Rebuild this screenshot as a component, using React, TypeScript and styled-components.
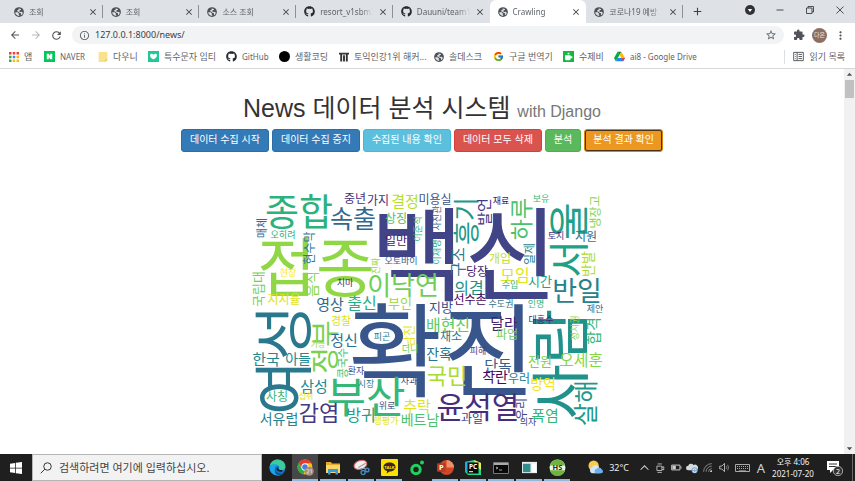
import React from "react";
import styled, { createGlobalStyle } from "styled-components";
import { FaGithub } from "react-icons/fa";
import { FcGoogle } from "react-icons/fc";
import {
  MdAdd, MdArrowBack, MdArrowForward, MdClose, MdExtension, MdInfoOutline,
  MdMoreVert, MdRefresh, MdStarBorder,
} from "react-icons/md";

const uiFont = `"Noto Sans", "Noto Sans CJK KR", sans-serif`;
const pageFont = `"Liberation Sans", "Noto Sans CJK KR", sans-serif`;

const GlobalStyle = createGlobalStyle`
  *, *::before, *::after { box-sizing: border-box; }
  body { margin: 0; background: #fff; font-family: ${uiFont}; overflow: hidden; }
  button, input { font: inherit; color: inherit; border: 0; padding: 0; margin: 0; background: none; }
  svg { display: block; flex: none; }
`;

const Screen = styled.div`
  display: flex;
  flex-direction: column;
  height: 100vh;
`;

/* ---------- browser chrome ---------- */
const TabStrip = styled.div`
  display: flex;
  flex: none;
  height: 23px;
  padding-left: 6px;
  background: #dee1e6;
`;
const TabList = styled.div`
  display: grid;
  grid-template-columns: repeat(7, 1fr);
  flex: 0 1 677px;
  min-width: 0;
`;
const Tab = styled.div<{ $active?: boolean; $line?: boolean }>`
  display: flex;
  align-items: center;
  gap: 5px;
  min-width: 0;
  padding: 0 5px 0 8px;
  color: #5f6368;
  background: ${(p) => (p.$active ? "#fff" : "transparent")};
  border-radius: 6px 6px 0 0;
  position: relative;
  &::after {
    content: "";
    display: ${(p) => (p.$line ? "block" : "none")};
    position: absolute;
    right: 0;
    top: 5px;
    width: 1px;
    height: 13px;
    background: #8d9196;
  }
`;
const TabLabel = styled.button`
  flex: 1;
  min-width: 0;
  overflow: hidden;
  white-space: nowrap;
  text-align: left;
  font-size: 8px;
  line-height: 14px;
  mask-image: linear-gradient(90deg, #000 75%, transparent);
`;
const IconButton = styled.button`
  display: flex;
  align-items: center;
  justify-content: center;
  flex: none;
  color: #3c4043;
`;
const NewTab = styled(IconButton)`
  width: 28px;
`;
const WindowControls = styled.div`
  display: flex;
  margin-left: auto;
  height: 20px;
`;
const WindowButton = styled(IconButton)`
  width: 30px;
`;

const Toolbar = styled.div`
  display: flex;
  align-items: center;
  flex: none;
  height: 24px;
  padding: 0 4px 0 4px;
`;
const NavButton = styled(IconButton)<{ $dim?: boolean }>`
  width: 21px;
  color: ${(p) => (p.$dim ? "#b4b7ba" : "#505357")};
`;
const Address = styled.label`
  display: flex;
  align-items: center;
  gap: 5px;
  flex: 1;
  height: 18px;
  margin: 0 4px 0 5px;
  padding: 0 7px 0 7px;
  border-radius: 9px;
  background: #f1f3f4;
  color: #5f6368;
`;
const UrlInput = styled.input`
  flex: 1;
  min-width: 0;
  font-size: 9px;
  line-height: 14px;
  color: #3c4043;
  outline: none;
`;
const Avatar = styled.button`
  width: 15px;
  height: 15px;
  margin: 0 3px;
  border-radius: 50%;
  background: #8d6e63;
  color: #efe3df;
  font-size: 6px;
  line-height: 14px;
  text-align: center;
  white-space: nowrap;
`;
const Bookmarks = styled.nav`
  display: flex;
  align-items: center;
  flex: none;
  height: 22px;
  padding: 0 10px 2px 9px;
  border-bottom: 1px solid #d5d7da;
`;
const Bookmark = styled.a<{ $w: number; $latin?: boolean }>`
  display: flex;
  align-items: center;
  gap: 5px;
  flex: 0 0 ${(p) => p.$w}px;
  font-size: ${(p) => (p.$latin ? 8 : 9)}px;
  line-height: 14px;
  color: #5f6368;
  white-space: nowrap;
  text-decoration: none;
`;
const ReadingList = styled.button`
  display: flex;
  align-items: center;
  gap: 6px;
  margin-left: auto;
  padding-left: 8px;
  border-left: 1px solid #dcdee0;
  font-size: 9px;
  line-height: 14px;
  color: #5f6368;
  white-space: nowrap;
`;

/* ---------- page ---------- */
const Viewport = styled.div`
  display: flex;
  flex: 1;
  min-height: 0;
`;
const Page = styled.main`
  display: flex;
  flex-direction: column;
  align-items: center;
  flex: 1;
  min-width: 0;
  overflow: hidden;
  padding-top: 24px;
  font-family: ${pageFont};
`;
const Title = styled.h1`
  margin: 0;
  font-size: 25px;
  font-weight: 400;
  line-height: 30px;
  color: #333;
  white-space: nowrap;
`;
const Subtitle = styled.small`
  font-size: 16px;
  line-height: 16px;
  color: #777;
`;
const Actions = styled.div`
  display: flex;
  gap: 3px;
  margin: 6px 0 38px;
`;
const Action = styled.button<{ $bg: string; $edge: string; $focus?: boolean }>`
  height: 23px;
  padding: 0 8px 1px;
  border: 1px solid ${(p) => p.$edge};
  border-radius: 3px;
  background: ${(p) => p.$bg};
  color: #fff;
  font-size: 10px;
  line-height: 14px;
  white-space: nowrap;
  outline: ${(p) => (p.$focus ? "1px solid #4a3413" : "none")};
  outline-offset: -2px;
`;
const Cloud = styled.svg`
  width: 368px;
  max-width: 100%;
  font-family: "Noto Sans CJK KR", sans-serif;
`;

const Scrollbar = styled.div`
  display: flex;
  flex-direction: column;
  align-items: center;
  flex: none;
  width: 11px;
  background: #f1f1f1;
`;
const ScrollArrow = styled(IconButton)`
  width: 11px;
  height: 11px;
  color: #505050;
`;
const Thumb = styled.div`
  width: 9px;
  height: 18px;
  margin-bottom: auto;
  background: #c1c1c1;
`;

/* ---------- taskbar ---------- */
const Taskbar = styled.footer`
  display: flex;
  flex: none;
  height: 27px;
  background: #1f1f1f;
  color: #f2f2f2;
`;
const Start = styled(IconButton)`
  width: 32px;
  color: #fff;
`;
const Search = styled.label`
  display: flex;
  align-items: center;
  gap: 7px;
  flex: 0 1 230px;
  min-width: 0;
  padding-left: 7px;
  border: 1px solid #b5b5b5;
  background: #f2f2f2;
  color: #333;
`;
const SearchInput = styled.input`
  flex: 1;
  min-width: 0;
  font-size: 11px;
  line-height: 16px;
  outline: none;
  &::placeholder { color: #444; opacity: 1; }
`;
const Apps = styled.div`
  display: flex;
  padding-left: 1px;
`;
const AppButton = styled(IconButton)<{ $open?: boolean; $active?: boolean }>`
  width: 26px;
  margin: 0 1px;
  padding-top: 2px;
  background: ${(p) => (p.$active ? "#474747" : "transparent")};
  border-bottom: 2px solid ${(p) => (p.$open ? "#8dbbe0" : "transparent")};
`;
const Tray = styled.div`
  display: flex;
  align-items: center;
  margin-left: auto;
`;
const Weather = styled.button`
  display: flex;
  align-items: center;
  gap: 6px;
  margin-right: 7px;
  font-size: 9px;
  line-height: 14px;
`;
const TrayButton = styled(IconButton)<{ $w?: number }>`
  width: ${(p) => p.$w ?? 16}px;
  height: 27px;
  color: #d0d0d0;
  font-size: 13px;
`;
const Clock = styled.time`
  width: 48px;
  font-size: 8px;
  line-height: 12px;
  text-align: center;
  white-space: nowrap;
`;
const ShowDesktop = styled.button`
  width: 3px;
  height: 27px;
  border-left: 1px solid #6a6a6a;
`;

type Word = [text: string, x: number, y: number, size: number, color: string, vertical?: boolean];

const words: Word[] = [
  ["백신", 464, 255, 102, "#414487"], ["확진", 442, 351, 102, "#39568c"],
  ["접종", 316, 267, 64, "#8fd744"], ["여성", 284, 360, 60, "#2a788e", true],
  ["사람", 561, 364, 60, "#21918c", true], ["부산", 366, 397, 43, "#35b779"],
  ["서울", 569, 240, 41, "#1fa187", true], ["종합", 299, 212, 37, "#2db27d"],
  ["윤석열", 478, 407, 30, "#472d7b"], ["정부", 325, 347, 29, "#7ad151", true],
  ["반일", 577, 291, 27, "#26828e"], ["이낙연", 403, 285, 26, "#6ece58"],
  ["흥기", 466, 221, 26, "#1f998a", true], ["살해", 586, 403, 25, "#1f998a", true],
  ["속출", 353, 219, 25, "#31688e"], ["하루", 521, 219, 23, "#4ac16d", true],
  ["감염", 319, 413, 22, "#443983"], ["국민", 447, 376, 22, "#a8db34"],
  ["중년", 355, 199, 12, "#472f7d"], ["가지", 378, 201, 12, "#472f7d"],
  ["결정", 405, 201, 15, "#b5de2b"], ["미용실", 435, 200, 12, "#3b528b"],
  ["매체", 262, 228, 11, "#31688e", true], ["오히려", 283, 235, 9, "#25ab82"],
  ["현수막", 310, 248, 12, "#2a788e", true], ["국립대", 258, 289, 13, "#73d056", true],
  ["현장", 288, 273, 9, "#fde725"], ["음식", 312, 284, 14, "#86d549", true],
  ["지지율", 284, 300, 12, "#dde318"], ["치마", 345, 283, 9, "#482475"],
  ["영상", 330, 304, 15, "#31688e"], ["출신", 362, 303, 16, "#26ad81"],
  ["상징", 396, 219, 12, "#4ac16d"], ["일만", 396, 241, 12, "#481769"],
  ["이준석", 418, 229, 9, "#35b779", true], ["사진관", 437, 218, 9, "#33638d", true],
  ["이재명", 437, 252, 9, "#25ab82", true], ["오토바이", 401, 261, 9, "#33638d"],
  ["진짜", 376, 266, 9, "#a0da39", true], ["발언", 484, 212, 15, "#443983", true],
  ["구조", 458, 262, 16, "#2a788e", true], ["당장", 477, 272, 12, "#481f70"],
  ["의겸", 469, 288, 16, "#21918c"], ["선수촌", 470, 300, 12, "#46085c"],
  ["부인", 400, 303, 13, "#9bd93c"], ["지방", 441, 307, 13, "#3b528b"],
  ["재료", 501, 201, 9, "#471365"], ["보유", 541, 199, 9, "#35b779"],
  ["냉장고", 596, 212, 12, "#86d549", true], ["토지", 556, 236, 9, "#472d7b"],
  ["지원", 586, 237, 12, "#2c728e"], ["일제", 530, 254, 12, "#26828e", true],
  ["개입", 500, 259, 12, "#c2df23"], ["모임", 515, 275, 16, "#dfe318"],
  ["반발", 588, 264, 14, "#addc30", true], ["수입", 510, 285, 9, "#35b779"],
  ["시간", 540, 281, 13, "#1fa187"], ["수도권", 501, 304, 9, "#2a788e"],
  ["인명", 536, 304, 9, "#31b57b"], ["제안", 595, 309, 9, "#31688e"],
  ["경찰", 341, 321, 11, "#d8e219"], ["정신", 344, 340, 15, "#2c728e"],
  ["가능", 318, 344, 8, "#a0da39"], ["콩국수", 343, 363, 11, "#4ac16d", true],
  ["한국", 266, 359, 15, "#23888e"], ["아들", 298, 359, 14, "#23888e"],
  ["환자", 356, 371, 9, "#3b528b"], ["삼성", 314, 386, 15, "#23888e"],
  ["사칭", 277, 397, 12, "#35b779"], ["섭취", 306, 396, 8, "#e5e419"],
  ["서유럽", 279, 419, 14, "#26828e"], ["방귀", 361, 415, 16, "#1f9e89"],
  ["시장", 366, 384, 9, "#2a788e"], ["피곤", 382, 337, 9, "#2a788e"],
  ["배현진", 448, 325, 16, "#5ec962"], ["채소", 451, 337, 12, "#2a788e"],
  ["남진", 410, 336, 12, "#e5e419", true], ["더니", 410, 349, 9, "#6ece58"],
  ["잔혹", 439, 354, 14, "#2c728e"], ["피해", 478, 351, 9, "#443983"],
  ["사과", 409, 381, 9, "#3e4a89"], ["위로", 387, 406, 9, "#39568c"],
  ["추락", 417, 406, 15, "#dde318"], ["베트남", 420, 420, 14, "#4ac16d"],
  ["행평가", 386, 421, 9, "#dde318"], ["과일", 472, 419, 12, "#443983"],
  ["달라", 504, 323, 15, "#481f70"], ["파업", 507, 335, 12, "#6ece58"],
  ["단독", 498, 365, 15, "#34618d"], ["착란", 495, 377, 14, "#46085c"],
  ["우러", 519, 379, 12, "#26828e"], ["우리", 522, 409, 12, "#414487", true],
  ["의자", 528, 422, 9, "#414487"], ["대홍수", 541, 320, 9, "#482475"],
  ["정치권", 575, 328, 9, "#8fd744", true], ["합격", 593, 331, 15, "#35b779", true],
  ["전원", 540, 361, 13, "#7ad151"], ["오세훈", 581, 360, 16, "#86d549"],
  ["방역", 543, 384, 14, "#f0e51d"], ["폭염", 545, 415, 15, "#35b779"],
];

function WordCloud() {
  return (
    <Cloud viewBox="238 190 368 240" role="img" aria-label="뉴스 워드 클라우드">
      {words.map(([text, x, y, size, color, vertical], i) => (
        <text
          key={i}
          fontSize={size}
          fill={color}
          textAnchor="middle"
          dy="0.37em"
          transform={`translate(${x} ${y})${vertical ? " rotate(-90)" : ""}`}
        >
          {text}
        </text>
      ))}
    </Cloud>
  );
}

/* ---------- small drawings ---------- */
const Svg = ({ s = 16, children }: { s?: number; children: React.ReactNode }) => (
  <svg width={s} height={s} viewBox="0 0 16 16" fill="none" aria-hidden="true">{children}</svg>
);

const Globe = () => (
  <Svg s={10}>
    <circle cx="8" cy="8" r="7.800" fill="#4d5155" />
    <path d="M2 8.300l4 .2 1.800 1.800-.3 1.500 1 .8-.3 1.700C4.800 14 2 11.500 2 8.300z" fill="#dfe2e5" />
    <path d="M7.500 2.200L11 3l.3 1.500L9 5.200 8.500 7l1.500.8 2.200-.3 1.800 1.300C13.800 11 13 12 12 13l-1-1.500 0-2H9.500L6.500 7 4.500 6.800 5.500 5l1.800-.5z" fill="#dfe2e5" />
  </Svg>
);
const AppsGrid = () => (
  <Svg s={10}>
    {["#ea4335", "#ea4335", "#ea4335", "#34a853", "#4285f4", "#fbbc04", "#34a853", "#fbbc04", "#fbbc04"].map((c, i) => (
      <rect key={i} x={(i % 3) * 6} y={Math.floor(i / 3) * 6} width="4" height="4" fill={c} />
    ))}
  </Svg>
);
const Naver = () => (
  <Svg s={11}><path d="M0 0h16v16H0z" fill="#03c75a" /><path d="M4 4h3l2 3.500V4h3v8H9L7 8.500V12H4z" fill="#fff" /></Svg>
);
const Note = () => (
  <Svg s={10}><path d="M1 0h14v12l-3 4H1z" fill="#fbe28a" /><path d="M15 12l-3 4v-4z" fill="#d9b64e" /></Svg>
);
const Heart = () => (
  <Svg s={11}><path d="M0 0h16v16H0z" fill="#1ec997" /><path d="M8 12.500C3 9 3 7.500 3 6.400 3 3.800 6.500 3.400 8 5.600 9.500 3.400 13 3.800 13 6.400 13 7.500 13 9 8 12.500z" fill="#fff" /></Svg>
);
const Dot = () => <Svg s={11}><circle cx="8" cy="8" r="8" fill="#000" /></Svg>;
const Pillars = () => (
  <Svg s={10}><path d="M0 1h16v3H0zM2 4h3v11H2zM6.500 5h3v10h-3zM11 4h3v11h-3z" fill="#333" /><path d="M5 2l3 4 3-4" stroke="#888" /></Svg>
);
const Cup = () => (
  <Svg s={11}><path d="M0 0h16v16H0z" fill="#12b83f" /><path d="M3 6h8v1.500h2.500v3H11V12a2 2 0 0 1-2 1.500H5A2 2 0 0 1 3 12zM6 4l2-2 2 2-2 1.200z" fill="#fff" /></Svg>
);
const Drive = () => (
  <Svg s={11}>
    <path d="M5.300 1h5.400L8 5.700z" fill="#188038" /><path d="M5.300 1L0 10.300 2.700 15 8 5.700z" fill="#00ac47" />
    <path d="M10.700 1L8 5.700l2.700 4.600H16z" fill="#ffba00" /><path d="M5.400 10.300H16L13.300 15H2.700z" fill="#2684fc" />
    <path d="M10.700 10.300H16L13.300 15z" fill="#ea4335" />
  </Svg>
);
const ReaderIcon = () => (
  <Svg s={11}>
    <path d="M1 2h14v12H1zM6 2v12M8 5h5M8 8h5M8 11h5M3 5h1M3 8h1M3 11h1" stroke="#55585c" strokeWidth="1.400" />
  </Svg>
);

const Edge = () => (
  <Svg s={17}>
    <circle cx="8" cy="8" r="7.500" fill="#1573ca" />
    <path d="M.6 7C1.600 2.600 4.600.5 8 .5c4.200 0 7.500 2.800 7.500 6.500 0 2.500-2 3.800-4 3.800-1.700 0-2.500-.8-2.200-1.500.8-1.300.3-3.500-2-3.700C4.500 5.300 2 5.500.6 7z" fill="#3bcb9d" />
    <path d="M.6 7C3 4.300 7 4.300 8.600 6c-2.800.3-4 3-2.700 5.500 1.300 2.400 4 3.300 7.600 1.800C9.800 17.500 1.500 15.500.5 9z" fill="#1aa5e8" />
    <path d="M5.900 8.500c-1 3 1.700 6.300 7.600 4.800-3 3.500-10 1.700-7.600-4.800z" fill="#0b4f94" />
    <path d="M8 8.200c-.7 2 1.700 3.500 4.500 2.700" stroke="#1f1f1f" strokeWidth="1.600" />
  </Svg>
);
const Chrome = () => (
  <Svg s={17}>
    <circle cx="7.500" cy="7.500" r="7" fill="#fbc116" />
    <path d="M1.400 4A7 7 0 0 1 13.600 4H7.500L5 9z" fill="#e33b2e" />
    <path d="M1.400 4l3.400 5.500 2.700 1.500-1.500 3.400A7 7 0 0 1 1.400 4z" fill="#2da94f" />
    <circle cx="7.500" cy="7.500" r="3.400" fill="#fff" /><circle cx="7.500" cy="7.500" r="2.600" fill="#3e7de9" />
    <circle cx="11.500" cy="11.500" r="4.300" fill="#a58b82" /><path d="M9 10h2v2.500H9M12 10.500h1M13.500 9.500v4M9 13.500h2" stroke="#e9dcd7" strokeWidth=".7" />
  </Svg>
);
const Folder = () => (
  <Svg s={16}>
    <path d="M1 2h5l1 1.500h8V13H1z" fill="#e8a92c" /><path d="M1 5h14v8H1z" fill="#fbd768" />
    <path d="M3 9h10v5.500h-2.500V12h-5v2.500H3z" fill="#3a98dc" />
  </Svg>
);
const Snip = () => (
  <Svg s={17}>
    <ellipse cx="7" cy="5.500" rx="6.200" ry="4" fill="#f3f1f1" stroke="#d26767" transform="rotate(-18 7 5.500)" />
    <path d="M5 8l7-4M7 9h6" stroke="#999" />
    <circle cx="9.500" cy="12.800" r="1.900" stroke="#4387bf" strokeWidth="1.400" /><circle cx="13.300" cy="10.300" r="1.700" stroke="#4387bf" strokeWidth="1.400" />
  </Svg>
);
const Talk = () => (
  <Svg s={17}>
    <rect width="16" height="16" rx="1" fill="#fbe300" />
    <path d="M8 3.200c3.400 0 5.700 1.900 5.700 4.300S11.400 11.800 8 11.800L5.400 13.600l.3-2.200C3.600 10.700 2.300 9.300 2.300 7.500 2.300 5.100 4.600 3.200 8 3.200z" fill="#3b2527" />
    <text x="8" y="9" textAnchor="middle" fontSize="4" fontWeight="700" fill="#fbe300">TALK</text>
  </Svg>
);
const Ring = () => (
  <Svg s={16}><circle cx="7" cy="9.500" r="4.200" stroke="#1ed35d" strokeWidth="3" /><circle cx="13" cy="2.500" r="2" fill="#1ed35d" /></Svg>
);
const PowerPoint = () => (
  <Svg s={17}>
    <circle cx="9" cy="8" r="7" fill="#d24726" /><path d="M9 1a7 7 0 0 1 7 7H9z" fill="#f18f6d" />
    <rect x="0" y="4" width="8" height="8" rx="1" fill="#b93a1c" />
    <text x="4" y="10.500" textAnchor="middle" fontSize="7" fontWeight="700" fill="#fff">P</text>
  </Svg>
);
const PyCharm = () => (
  <Svg s={16}>
    <path d="M0 2l9-2 7 3v12H3L0 12z" fill="#21d789" /><path d="M9 0l7 3v7l-5-4z" fill="#e9f04f" /><path d="M0 2l4-1v11H0z" fill="#18aee0" />
    <rect x="2.500" y="2.500" width="11" height="11" fill="#0a0a0a" />
    <text x="8" y="8.800" textAnchor="middle" fontSize="6.500" fontWeight="700" fill="#fff">PC</text><path d="M4 11.700h4" stroke="#fff" />
  </Svg>
);
const Terminal = () => (
  <Svg s={16}><path d="M.5 2.500h15v11H.5z" fill="#090909" stroke="#777" /><path d="M1 3h14v2H1z" fill="#aaa" /><path d="M3 7l2 1-2 1M6 10h3" stroke="#ccc" strokeWidth=".8" /></Svg>
);
const WindowApp = () => (
  <Svg s={15}><path d="M0 2h16v12H0z" fill="#e7eef0" /><path d="M1 4h8v9H1z" fill="#348d8d" /><path d="M10.500 4H15v9h-4.500z" fill="#fff" /></Svg>
);
const Hs = () => (
  <Svg s={17}>
    <circle cx="8" cy="8" r="7.500" fill="#eef6e9" /><path d="M.8 6a7.500 7.500 0 0 1 14.400 0zM.8 10.500a7.500 7.500 0 0 0 14.400 0z" fill="#6eb43f" />
    <text x="8" y="10.500" textAnchor="middle" fontSize="7" fontWeight="700" fill="#17351a">HS</text>
  </Svg>
);

const tabs = [
  { icon: "web", title: "조회", line: true },
  { icon: "web", title: "조회", line: true },
  { icon: "web", title: "소스 조회", line: true },
  { icon: "git", title: "resort_v1sbm3", line: true },
  { icon: "git", title: "Dauuni/team1" },
  { icon: "web", title: "Crawling", active: true },
  { icon: "web", title: "코로나19 예방", line: true },
];

const bookmarks = [
  { icon: <AppsGrid />, title: "앱", w: 35 },
  { icon: <Naver />, title: "NAVER", w: 54, latin: true },
  { icon: <Note />, title: "다우니", w: 50 },
  { icon: <Heart />, title: "특수문자 임티", w: 78 },
  { icon: <FaGithub size={11} color="#24292e" />, title: "GitHub", w: 53, latin: true },
  { icon: <Dot />, title: "생활코딩", w: 60 },
  { icon: <Pillars />, title: "토익인강1위 해커...", w: 95 },
  { icon: <Globe />, title: "솔데스크", w: 59 },
  { icon: <FcGoogle size={11} />, title: "구글 번역기", w: 70 },
  { icon: <Cup />, title: "수제비", w: 51 },
  { icon: <Drive />, title: "ai8 - Google Drive", w: 90, latin: true },
];

const actions = [
  { label: "데이터 수집 시작", bg: "#337ab7", edge: "#2e6da4" },
  { label: "데이터 수집 중지", bg: "#337ab7", edge: "#2e6da4" },
  { label: "수집된 내용 확인", bg: "#5bc0de", edge: "#46b8da" },
  { label: "데이터 모두 삭제", bg: "#d9534f", edge: "#d43f3a" },
  { label: "분석", bg: "#5cb85c", edge: "#4cae4c" },
  { label: "분석 결과 확인", bg: "#ec971f", edge: "#d58512", focus: true },
];

const apps = [
  { name: "Edge", icon: <Edge /> },
  { name: "Chrome", icon: <Chrome />, open: true, active: true },
  { name: "파일 탐색기", icon: <Folder />, open: true },
  { name: "캡처 도구", icon: <Snip />, open: true },
  { name: "카카오톡", icon: <Talk />, open: true },
  { name: "메신저", icon: <Ring /> },
  { name: "PowerPoint", icon: <PowerPoint />, open: true },
  { name: "PyCharm", icon: <PyCharm />, open: true },
  { name: "명령 프롬프트", icon: <Terminal />, open: true },
  { name: "프로그램", icon: <WindowApp />, open: true },
  { name: "HeidiSQL", icon: <Hs />, open: true },
];

export default function App() {
  return (
    <Screen>
      <GlobalStyle />
      <TabStrip>
        <TabList>
          {tabs.map((t, i) => (
            <Tab key={i} $active={t.active} $line={t.line}>
              {t.icon === "web" ? <Globe /> : <FaGithub size={11} color="#24292e" />}
              <TabLabel>{t.title}</TabLabel>
              <IconButton aria-label="탭 닫기"><MdClose size={10} /></IconButton>
            </Tab>
          ))}
        </TabList>
        <NewTab aria-label="새 탭"><MdAdd size={13} /></NewTab>
        <WindowControls>
          <WindowButton aria-label="탭 검색">
            <Svg s={10}><circle cx="8" cy="8" r="8" fill="#303236" /><path d="M4.500 6.500h7L8 11z" fill="#fff" /></Svg>
          </WindowButton>
          <WindowButton aria-label="최소화"><Svg s={8}><path d="M1 8h14" stroke="currentColor" strokeWidth="1.800" /></Svg></WindowButton>
          <WindowButton aria-label="이전 크기로"><Svg s={8}><path d="M1 4h11v11H1zM4 4V1h11v11h-3" stroke="currentColor" strokeWidth="1.800" /></Svg></WindowButton>
          <WindowButton aria-label="닫기"><Svg s={8}><path d="M1 1l14 14M15 1L1 15" stroke="currentColor" strokeWidth="1.800" /></Svg></WindowButton>
        </WindowControls>
      </TabStrip>

      <Toolbar>
        <NavButton aria-label="뒤로"><MdArrowBack size={12} /></NavButton>
        <NavButton aria-label="앞으로" $dim><MdArrowForward size={12} /></NavButton>
        <NavButton aria-label="새로고침"><MdRefresh size={13} /></NavButton>
        <Address>
          <MdInfoOutline size={11} />
          <UrlInput aria-label="주소" defaultValue="127.0.0.1:8000/news/" />
          <MdStarBorder size={12} />
        </Address>
        <NavButton aria-label="확장 프로그램"><MdExtension size={12} /></NavButton>
        <Avatar>다은</Avatar>
        <NavButton aria-label="메뉴"><MdMoreVert size={13} /></NavButton>
      </Toolbar>

      <Bookmarks aria-label="북마크">
        {bookmarks.map((b) => (
          <Bookmark key={b.title} href="#" $w={b.w} $latin={b.latin}>{b.icon}{b.title}</Bookmark>
        ))}
        <ReadingList><ReaderIcon />읽기 목록</ReadingList>
      </Bookmarks>

      <Viewport>
        <Page>
          <Title>News 데이터 분석 시스템 <Subtitle>with Django</Subtitle></Title>
          <Actions>
            {actions.map((a) => (
              <Action key={a.label} $bg={a.bg} $edge={a.edge} $focus={a.focus}>{a.label}</Action>
            ))}
          </Actions>
          <WordCloud />
        </Page>
        <Scrollbar>
          <ScrollArrow aria-label="위로"><Svg s={7}><path d="M2 11l6-7 6 7z" fill="currentColor" /></Svg></ScrollArrow>
          <Thumb />
          <ScrollArrow aria-label="아래로"><Svg s={7}><path d="M2 5l6 7 6-7z" fill="currentColor" /></Svg></ScrollArrow>
        </Scrollbar>
      </Viewport>

      <Taskbar>
        <Start aria-label="시작">
          <Svg s={12}><path d="M0 2.300l6.800-1v6.200H0zM7.800 1.100L16 0v7.500H7.800zM0 8.500h6.800v6.200L0 13.700zM7.800 8.500H16V16l-8.200-1.100z" fill="currentColor" /></Svg>
        </Start>
        <Search>
          <Svg s={12}><circle cx="10" cy="6" r="5" stroke="currentColor" strokeWidth="1.300" /><path d="M6.400 9.600L1 15" stroke="currentColor" strokeWidth="1.300" /></Svg>
          <SearchInput aria-label="검색" placeholder="검색하려면 여기에 입력하십시오." />
        </Search>
        <Apps>
          {apps.map((a) => (
            <AppButton key={a.name} aria-label={a.name} $open={a.open} $active={a.active}>{a.icon}</AppButton>
          ))}
        </Apps>
        <Tray>
          <Weather>
            <Svg s={15}>
              <circle cx="6" cy="6" r="5.500" fill="#fbc94a" />
              <path d="M4 14a3.500 3.500 0 0 1 .5-6.500 4 4 0 0 1 7.500.8A3 3 0 0 1 13 14z" fill="#cfe6fa" /><path d="M8 14a2.500 2.500 0 0 1 1-4.500 3 3 0 0 1 5 .5 2 2 0 0 1 0 4z" fill="#6bb0ec" />
            </Svg>
            32°C
          </Weather>
          <TrayButton aria-label="숨겨진 아이콘"><Svg s={9}><path d="M1 12l7-7 7 7" stroke="currentColor" strokeWidth="1.800" /></Svg></TrayButton>
          <TrayButton aria-label="카메라"><Svg s={10}><path d="M3 5h8v7H3zM11 7l3-1v5l-3-1M4 1.500h7M4 15h7" stroke="currentColor" strokeWidth="1.300" /></Svg></TrayButton>
          <TrayButton aria-label="배터리"><Svg s={11}><path d="M1 4.500h12v7H1zM14.500 6.500v3" stroke="currentColor" strokeWidth="1.400" /><path d="M2 5.500h5v5H2z" fill="currentColor" /></Svg></TrayButton>
          <TrayButton aria-label="클라우드"><Svg s={12}><path d="M3 11a3 3 0 0 1 0-6 4 4 0 0 1 7-1 3.500 3.500 0 0 1 4 7z" fill="#d6dade" /><circle cx="11.500" cy="11" r="4" fill="#7fa6cc" /><path d="M9.500 11a2 2 0 0 1 4 0M13.500 12a2 2 0 0 1-4 0" stroke="#fff" /></Svg></TrayButton>
          <TrayButton aria-label="네트워크"><Svg s={10}><path d="M1 14A13 13 0 0 1 14 1M5 14a9 9 0 0 1 9-9M9 14a5 5 0 0 1 5-5" stroke="#999" strokeWidth="1.300" /><circle cx="13" cy="13" r="1.500" fill="#ddd" /></Svg></TrayButton>
          <TrayButton aria-label="소리"><Svg s={11}><path d="M1 6h3l4-4v12l-4-4H1z" stroke="currentColor" strokeWidth="1.200" /><path d="M10.500 6q1.500 2 0 4M12.500 4q3 4 0 8" stroke="#aaa" /></Svg></TrayButton>
          <TrayButton aria-label="키보드" $w={21}>
            <svg width="15" height="10" viewBox="0 0 15 10" fill="none"><path d="M.5 1.500h14v7H.5z" stroke="#aaa" /><path d="M2 3.500h11M2 5.500h11" stroke="#aaa" strokeDasharray="1 1" /><path d="M4 7.500h7" stroke="#777" /></svg>
          </TrayButton>
          <TrayButton aria-label="영문 입력">A</TrayButton>
          <Clock>오후 4:06<br />2021-07-20</Clock>
          <TrayButton aria-label="알림" $w={35}>
            <Svg s={16}>
              <path d="M0 1h12v9H6l-3 3v-3H0z" fill="#fff" /><path d="M2 4h8M2 6.500h8" stroke="#333" />
              <circle cx="11" cy="11" r="4.700" fill="#333" stroke="#ddd" strokeWidth=".7" />
              <text x="11" y="13.500" textAnchor="middle" fontSize="7" fill="#fff">2</text>
            </Svg>
          </TrayButton>
          <ShowDesktop aria-label="바탕 화면 보기" />
        </Tray>
      </Taskbar>
    </Screen>
  );
}
